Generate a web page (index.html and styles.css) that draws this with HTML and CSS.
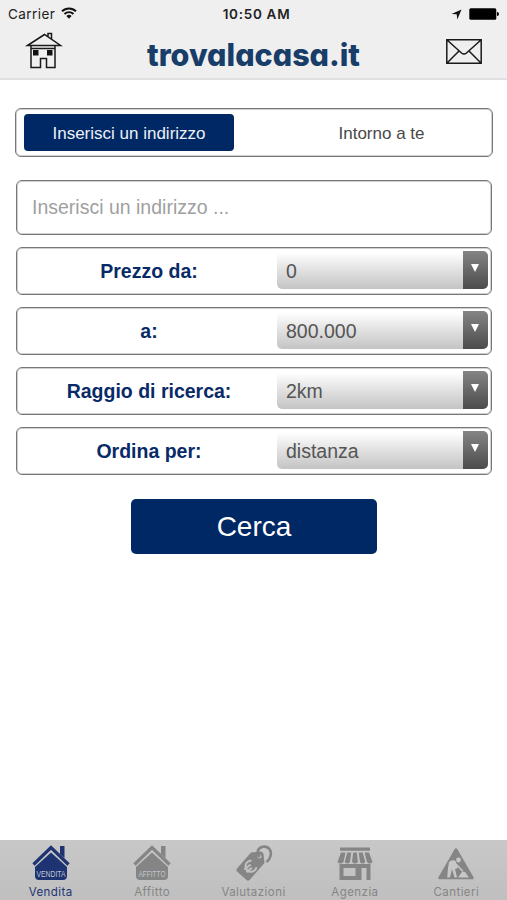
FILE: index.html
```html
<!DOCTYPE html>
<html lang="it">
<head>
  <meta charset="UTF-8">
  <meta name="viewport" content="width=device-width, initial-scale=1.0">
  <title>trovalacasa.it</title>
  <link rel="stylesheet" href="styles.css">
</head>
<body>

<header class="header">
  <div class="status-bar">
    <div class="carrier">
      <span>Carrier</span>
      <svg width="16" height="12" viewBox="0 0 16 12" fill="none" stroke="#111" stroke-width="1.9">
        <path d="M1 4.3a10 10 0 0 1 14 0M3.5 7a6.4 6.4 0 0 1 9 0"/>
        <path d="M8 11.7L5.4 9.1a3.7 3.7 0 0 1 5.2 0z" fill="#111" stroke="none"/>
      </svg>
    </div>
    <div class="time">10:50 AM</div>
    <div class="battery">
      <svg width="11" height="11" viewBox="0 0 11 11"><path d="M10.5 .5L6.3 10.5L5.7 5.3L.5 5z" fill="#111"/></svg>
      <svg width="30" height="12" viewBox="0 0 30 12"><rect x=".3" y=".3" width="27" height="11.4" rx="1.5"/><path d="M28 4q2 0 2 2t-2 2z"/></svg>
    </div>
  </div>
  <div class="nav-bar">
    <a class="nav-link" href="#">
      <svg width="36" height="38" viewBox="0 0 36 38" fill="none" stroke="#1a1a1a" stroke-width="1.5">
        <path d="M1.5 13.5L18.5 2.5L34.5 13.5zM22 4.5V1.5h3.5V7"/>
        <path d="M4.5 14v21.5h9.500V26.500h6v9h8.500V14M4.500 16.500h23.500" transform="translate(.5 0)"/>
        <path d="M7 18h5.500v5.500H7zM21 18h5.500v5.500H21z" fill="#111" stroke="none"/>
      </svg>
    </a>
    <div class="logo">
      <svg width="216" height="46" viewBox="0 0 216 46"><text class="logo-text" x="1" y="34" textLength="213" lengthAdjust="spacingAndGlyphs">trovalacasa.it</text></svg>
    </div>
    <a class="nav-link" href="#">
      <svg width="36" height="38" viewBox="0 0 36 38" fill="none" stroke="#1a1a1a" stroke-width="1.5">
        <path d="M.8 7.800h34.400v23.500H.8zM.8 7.800L15.500 21q2.500 2 5 0L35.200 7.800M.8 31.300L13 19M35.200 31.300L23 19"/>
      </svg>
    </a>
  </div>
</header>

<main class="content">
  <div class="switch">
    <button class="switch-item active">Inserisci un indirizzo</button>
    <button class="switch-item">Intorno a te</button>
  </div>

  <form class="search">
    <input class="address" type="text" placeholder="Inserisci un indirizzo ...">
    <div class="row">
      <label for="min">Prezzo da:</label>
      <div class="select-box"><select id="min"><option>0</option></select><span class="arrow"></span></div>
    </div>
    <div class="row">
      <label for="max">a:</label>
      <div class="select-box"><select id="max"><option>800.000</option></select><span class="arrow"></span></div>
    </div>
    <div class="row">
      <label for="radius">Raggio di ricerca:</label>
      <div class="select-box"><select id="radius"><option>2km</option></select><span class="arrow"></span></div>
    </div>
    <div class="row">
      <label for="order">Ordina per:</label>
      <div class="select-box"><select id="order"><option>distanza</option></select><span class="arrow"></span></div>
    </div>
    <button class="submit" type="button">Cerca</button>
  </form>
</main>

<nav class="tabs">
  <a class="tab active" href="#">
    <svg width="40" height="38" viewBox="0 0 40 38">
      <path d="M2.500 20.500L20 3.500L37.500 20.500" fill="none" stroke="currentColor" stroke-width="3.200"/>
      <path d="M29 2h4.500v12L29 10zM20 8.500L36 23v9q0 4-4 4H8q-4 0-4-4V23z" fill="currentColor"/>
      <text class="house-text" x="5.500" y="32.500" textLength="29" lengthAdjust="spacingAndGlyphs">VENDITA</text>
    </svg>
    <span>Vendita</span>
  </a>
  <a class="tab" href="#">
    <svg width="40" height="38" viewBox="0 0 40 38">
      <path d="M2.500 20.500L20 3.500L37.500 20.500" fill="none" stroke="currentColor" stroke-width="3.200"/>
      <path d="M29 2h4.500v12L29 10zM20 8.500L36 23v9q0 4-4 4H8q-4 0-4-4V23z" fill="currentColor"/>
      <text class="house-text" x="6.500" y="32.500" textLength="27" lengthAdjust="spacingAndGlyphs">AFFITTO</text>
    </svg>
    <span>Affitto</span>
  </a>
  <a class="tab" href="#">
    <svg width="40" height="38" viewBox="0 0 40 38">
      <path d="M17 8.500L26.500 7.500Q29 7.500 29.500 10L30.500 19L15.500 36Q14 37.500 12.500 36L3 27.500Q1.800 26 3 24.500z" fill="currentColor"/>
      <circle cx="25.500" cy="12.500" r="2" fill="#c1c1c1"/>
      <path d="M25.500 13C22 8 24 3.500 29 2.700C35 2 38 7 36.500 12Q35.500 16 32.500 18" fill="none" stroke="currentColor" stroke-width="2.600"/>
      <g transform="rotate(-38 16 23)" fill="none" stroke="#c1c1c1" stroke-width="2"><path d="M21 19A5.500 5.500 0 1 0 21 27M10 21.500h8M10 24.800h7"/></g>
    </svg>
    <span>Valutazioni</span>
  </a>
  <a class="tab" href="#">
    <svg width="40" height="38" viewBox="0 0 40 38" fill="currentColor">
      <path d="M5 3.500h30v3.300H5zM6 8.500h4.500L8.500 18q-3 3-6 0zM12.300 8.500h4L15 18q-2.700 3-5.300 0zM18.200 8.500h3.600L23 18q-3 3-6 0zM23.700 8.500h4L30.300 18q-3 3-5.300 0zM29.500 8.500H34l3.500 9.500q-2.800 3-5.500 0z"/>
      <path fill-rule="evenodd" d="M4.500 20h31v16h-4V24h-5v12h-22zM8.500 24v8h12v-8z"/>
    </svg>
    <span>Agenzia</span>
  </a>
  <a class="tab" href="#">
    <svg width="40" height="38" viewBox="0 0 40 38">
      <path d="M20 5.500L36.500 34H3.500z" fill="currentColor" stroke="currentColor" stroke-width="2.500" stroke-linejoin="round"/>
      <circle cx="22.500" cy="16" r="2.400" fill="#c7c7c7"/>
      <path d="M13 18q3-3 6.500-1l2.500 7-3 1 2 8.500h-2.500L16 25l-2 8.500h-2.800L12 24zM22 33.500l4-5.500h3l4 5.500z" fill="#c7c7c7"/>
      <path d="M20 20L27 27.500" fill="none" stroke="#c7c7c7" stroke-width="1.500"/>
    </svg>
    <span>Cantieri</span>
  </a>
</nav>

</body>
</html>
```
FILE: styles.css
```css
* {
  box-sizing: border-box;
}

body {
  margin: 0;
  height: 100vh;
  display: flex;
  flex-direction: column;
  background: #fff;
  font-family: "Liberation Sans", Arial, sans-serif;
  overflow: hidden;
}

button, input, select {
  font-family: inherit;
  margin: 0;
}

svg {
  display: block;
  overflow: visible;
}

.header {
  height: 80px;
  background: #efefef;
  border-bottom: 2px solid #dfe0e1;
}

.status-bar {
  height: 28px;
  padding: 0 8px 0 8px;
  display: grid;
  grid-template-columns: 1fr auto 1fr;
  align-items: center;
  font-family: Inter, sans-serif;
  font-size: 13.5px;
  color: #222;
}

.carrier {
  display: flex;
  align-items: center;
  gap: 6px;
  letter-spacing: .45px;
}

.carrier svg {
  margin-top: -2px;
}

.time {
  padding-left: 6px;
  font-weight: 600;
  letter-spacing: .7px;
}

.battery {
  display: flex;
  align-items: center;
  justify-content: flex-end;
  gap: 7px;
}

.nav-bar {
  height: 50px;
  padding: 4px 25px 0 26px;
  display: flex;
  justify-content: space-between;
}

/* cv11 is the single-storey a */
.logo-text {
  font-family: Inter, sans-serif;
  font-feature-settings: "cv11";
  font-size: 31px;
  font-weight: 800;
  fill: #173d68;
}

.content {
  flex: 1;
  padding: 28px 15px 0;
}

.switch {
  width: 478px;
  height: 49px;
  padding: 5px 8px;
  display: flex;
  border: 1px solid #777;
  border-radius: 6px;
  box-shadow: inset 0 0 0 1px #d0d0d0;
}

.switch-item {
  width: 210px;
  height: 37px;
  padding: 2px 0 0;
  border: 0;
  border-radius: 4px;
  background: none;
  font-size: 17px;
  color: #484848;
}

.switch-item + .switch-item {
  width: auto;
  flex: 1;
  padding-left: 45px;
}

.switch-item.active {
  background: #002864;
  color: #edf1f8;
}

.search {
  width: 476px;
  margin: 23px 0 0 1px;
  display: flex;
  flex-direction: column;
  gap: 12px;
}

.address {
  height: 55px;
  padding: 0 15px;
  border: 1px solid #777;
  border-radius: 6px;
  box-shadow: inset 0 0 0 1px #d0d0d0;
  font-size: 19.5px;
}

.address::placeholder {
  color: #a0a0a0;
}

.row {
  height: 48px;
  padding: 0 3px 0 0;
  display: flex;
  align-items: center;
  border: 1px solid #777;
  border-radius: 6px;
  box-shadow: inset 0 0 0 1px #d0d0d0;
}

.row label {
  flex: 1;
  padding-left: 4px;
  text-align: center;
  font-size: 19.5px;
  font-weight: bold;
  color: #082b68;
}

.select-box {
  width: 211px;
  height: 38px;
  margin-top: -2px;
  display: flex;
  border-radius: 5px;
  overflow: hidden;
  background: linear-gradient(#fff 5%, #e4e4e4 45%, #c4c4c4);
}

.select-box select {
  flex: 1;
  padding: 2px 9px 0;
  appearance: none;
  border: 0;
  background: none;
  font-size: 19.5px;
  color: #555;
}

.arrow {
  width: 25px;
  display: flex;
  justify-content: center;
  background: linear-gradient(#858585, #4c4c4c);
}

.arrow::after {
  content: "";
  height: 8px;
  margin: 13px 2px 0 0;
  border: 4.5px solid transparent;
  border-top: 8px solid #fff;
  border-bottom: 0;
}

.submit {
  width: 246px;
  height: 55px;
  margin-top: 12px;
  padding: 0;
  align-self: center;
  border: 0;
  border-radius: 5px;
  background: #002864;
  color: #fff;
  font-size: 28px;
}

.tabs {
  height: 60px;
  display: flex;
  background: linear-gradient(#c8c8c8, #bfbfbf);
}

.tab {
  flex: 1;
  padding-top: 4px;
  display: flex;
  flex-direction: column;
  align-items: center;
  gap: 3px;
  color: #858585;
  font-family: Inter, sans-serif;
  font-size: 11.5px;
  line-height: 14px;
  letter-spacing: .45px;
  text-decoration: none;
}

.tab.active {
  color: #1e3472;
}

.house-text {
  font-family: "Liberation Sans", sans-serif;
  font-size: 8.5px;
  letter-spacing: 0;
  fill: #c0c5cf;
}
```
